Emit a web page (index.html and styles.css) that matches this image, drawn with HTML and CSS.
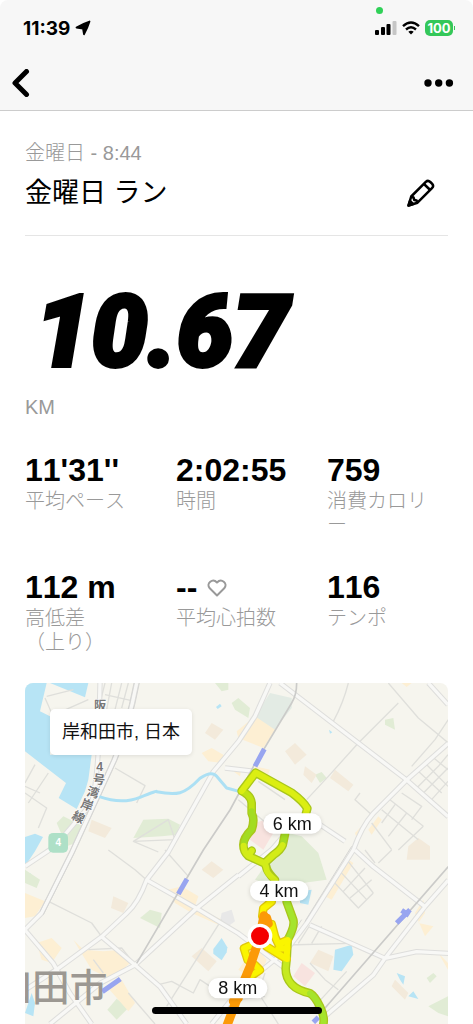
FILE: index.html
```html
<!DOCTYPE html>
<html lang="ja">
<head>
  <meta charset="UTF-8" />
  <meta name="viewport" content="width=device-width, initial-scale=1" />
  <title>金曜日 ラン</title>
  <link rel="stylesheet" href="styles.css">
</head>
<body>
  <header class="top-bar">
    <!-- Status bar -->
    <div class="status-bar">
      <span class="clock">11:39</span>
      <svg class="location" viewBox="0 0 16 16" width="16" height="16"><path d="M14.500 1.500Q12.500 8 9 14.300L8 8.500 1.500 7.500Q8 3.500 14.500 1.500Z" stroke="#000" stroke-width="1.800" stroke-linejoin="round"/></svg>
      <span class="camera-dot"></span>
      <svg class="signal" viewBox="0 0 22 14" width="22" height="14">
        <rect x="0" y="9" width="4" height="5" rx="1"/>
        <rect x="6" y="6" width="4" height="8" rx="1"/>
        <rect x="11.500" y="3" width="4" height="11" rx="1"/>
        <rect x="17.500" y="0" width="4" height="14" rx="1" fill="#c6c6c6"/>
      </svg>
      <svg class="wifi" viewBox="0 0 18 14" width="18" height="14" fill="none" stroke="#000" stroke-width="2.400">
        <path d="M1 5.200Q9-2.200 17 5.200M4 8.500Q9 4 14 8.500"/>
        <path d="M6.300 10.800Q9 8.800 11.700 10.800L9 13.600Z" fill="#000" stroke="none"/>
      </svg>
      <span class="battery">100</span>
    </div>
    <!-- Navigation -->
    <nav class="nav">
      <button type="button" aria-label="戻る">
        <svg viewBox="0 0 18 28" width="18" height="28" fill="none" stroke="#000" stroke-width="5" stroke-linecap="round" stroke-linejoin="round"><path d="M14.500 2.500 3 14 14.500 25.500"/></svg>
      </button>
      <button type="button" aria-label="メニュー">
        <svg viewBox="0 0 30 8" width="30" height="8"><circle cx="4" cy="4" r="3.700"/><circle cx="14.700" cy="4" r="3.700"/><circle cx="25.400" cy="4" r="3.700"/></svg>
      </button>
    </nav>
  </header>

  <main class="run">
    <section class="run-header">
      <div>
        <p class="run-date">金曜日 - 8:44</p>
        <h1>金曜日 ラン</h1>
      </div>
      <button type="button" aria-label="編集">
        <svg viewBox="0 0 28 28" width="28" height="28" fill="none" stroke="#000" stroke-width="2.500" stroke-linejoin="round">
          <path d="M1.500 26.500 4.200 17.500 18.800 2.900Q21 .800 23.300 3L25 4.700Q27.200 7 25 9.200L10.500 23.700Z"/>
          <path d="M17 5 23.200 11M4.300 17.700 6.500 18.500 7.300 21 9.600 21.500 10.400 23.600"/>
          <path d="M1.500 26.500 3 22 6 25Z" fill="#000"/>
        </svg>
      </button>
    </section>

    <p class="distance">10.67</p>
    <p class="unit">KM</p>

    <section class="stats">
      <div class="stat">
        <p class="value">11'31''</p>
        <p class="label">平均ペース</p>
      </div>
      <div class="stat">
        <p class="value">2:02:55</p>
        <p class="label">時間</p>
      </div>
      <div class="stat">
        <p class="value">759</p>
        <p class="label">消費カロリー</p>
      </div>
      <div class="stat">
        <p class="value">112 m</p>
        <p class="label">高低差<br>（上り）</p>
      </div>
      <div class="stat">
        <p class="value">--
          <svg viewBox="0 0 20 18" width="20" height="18" fill="none" stroke="#999" stroke-width="2" stroke-linejoin="round"><path d="M10 16.500 2.500 9C-1 4.500 5.500-1.500 10 3.500 14.500-1.500 21 4.500 17.500 9Z"/></svg>
        </p>
        <p class="label">平均心拍数</p>
      </div>
      <div class="stat">
        <p class="value">116</p>
        <p class="label">テンポ</p>
      </div>
    </section>

    <!-- Route map -->
    <section class="map">
      <svg class="map-canvas" viewBox="0 0 1269 1023" preserveAspectRatio="xMidYMin slice">
        <defs>
          <g id="roads">
            <path d="M765 0 1145 291 1270 401"/>
            <path d="M1270 181 1145 291 1045 391Q1010 430 985 501L845 721 785 801 650 911 560 1023"/>
            <path d="M335 0Q310 130 268 231L195 390 140 510 50 690 0 740"/>
            <path d="M225 0 220 200Q215 300 200 360L90 490 0 550"/>
            <path d="M735 0 690 100 640 176 565 266 430 507 365 591Q340 660 305 691L230 761 100 856 0 921"/>
            <path d="M365 591 515 676 640 751 785 860"/>
            <path d="M640 576 515 676 330 846 225 901 75 1023M230 761 330 846 405 911 485 1023"/>
            <path d="M0 741 85 841 135 931 200 1023M600 255 690 265M640 580 740 500 800 430"/>
            <path d="M990 501 1045 551 1200 671M855 726 1080 826 1200 671 1270 591M1270 811 1175 806 1080 826 1045 876 900 1000"/>
            <path d="M840 395 960 475M1210 0 1269 65"/>
          </g>
        </defs>
        <!-- water -->
        <g class="water">
          <path d="M0 0H65L45 85 75 100 75 215H200L190 290 180 325 155 378 101 345 123 300 0 205Z"/>
          <path d="M75 0H190L180 43Z"/>
          <path d="M0 462 30 452 54 462 30 505 0 550Z"/>
          <path d="M565 798 590 765 607 793 605 808 590 832 565 812Z"/>
          <path d="M930 800 980 785 985 815 950 865 925 860Z"/>
          <path d="M1115 870 1140 880 1135 905 1125 890ZM1165 925 1180 948 1150 940ZM825 625 860 620 850 665 825 660Z"/>
          <path d="M832 545 845 535 850 545 838 558ZM15 570 30 590 28 605 15 590ZM20 930 30 960 25 1000 0 990 10 960Z"/>
          <path d="M573 72 585 62 590 70 578 78ZM912 140 922 148 915 152Z"/>
        </g>
        <!-- parks and schools -->
        <g class="park">
          <path d="M355 410 430 407 465 425 455 455 410 460 325 465Z"/>
          <path d="M115 400 175 430 165 475 125 490 95 420Z"/>
          <path d="M375 680 410 690 405 735 345 705Z"/>
          <path d="M275 947 310 975 275 1010 247 980Z"/>
          <path d="M570 0H610V20L590 25ZM620 60 640 45 675 75 670 105 630 80Z"/>
          <path d="M1080 110 1105 105 1110 140 1080 125ZM870 275 890 267 905 285 885 300Z"/>
          <path d="M740 520 790 450 830 460 880 510 905 590 760 610 690 590Z"/>
          <path d="M1205 885 1225 870 1235 880 1215 900ZM1210 970 1269 940V1000L1240 990Z"/>
          <path d="M0 560 45 590 35 615 0 600Z"/>
        </g>
        <path class="plant" d="M735 30 800 45 800 75 745 145 690 100Z"/>
        <path class="hospital" d="M690 420 720 410 745 450 715 500 675 470ZM830 840 870 870 840 910 805 880Z"/>
        <g class="school">
          <path d="M540 150 560 120 595 140 570 170ZM200 410 260 435 240 465 190 445Z"/>
          <path d="M780 205 810 180 845 215 810 245ZM840 250 875 275 860 300 835 275ZM930 260 985 305 970 325 915 285Z"/>
          <path d="M265 640 310 660 295 690 258 675ZM530 560 560 535 595 560 565 585ZM500 820 530 795 575 835 550 865Z"/>
          <path d="M880 800 925 820 910 865 855 840ZM1110 890 1150 930 1140 950 1100 910ZM1150 490 1180 465 1215 490V530H1145Z"/>
        </g>
        <!-- built-up areas -->
        <g class="town">
          <path d="M530 210 560 195 595 215 590 240 550 235ZM690 100 750 140 715 195 640 165 635 145Z"/>
          <path d="M0 630 60 655 30 700 0 705ZM35 780 80 765 110 795 80 840 50 830Z"/>
          <path d="M145 770 175 800 235 805 290 800 315 840 260 890 200 860Z"/>
          <path d="M430 620 470 610 520 640 510 670 590 710 580 725 500 690 450 660Z"/>
          <path d="M245 910 290 890 330 960 310 985Z"/>
          <path d="M990 450 1010 430 1015 445 995 465ZM1030 440 1060 400 1070 410 1040 455ZM900 640 970 530 985 540 920 650Z"/>
          <path d="M1170 690 1195 650 1200 690 1180 720 1225 730 1200 760ZM690 250 735 260 725 285 690 275ZM625 265 650 255 645 280Z"/>
          <path d="M640 860 690 790 725 830 700 900ZM1240 810 1269 840V860ZM1130 0H1160L1145 12Z"/>
        </g>
        <path class="block" d="M590 690 620 680 630 715 610 730 585 715Z"/>
        <!-- small streets -->
        <g class="street">
          <path d="M65 40 145 20M110 85 190 50M60 45 80 90M240 0 225 60M260 0 245 80M290 0 270 80M240 35 330 55M310 0 290 75"/>
          <path d="M0 330 65 375 40 435M30 245 0 300M70 270 10 360M0 310 45 330"/>
          <path d="M270 255 360 308 335 360M325 475 430 410 450 470 325 475 400 507"/>
          <path d="M250 501 330 560 365 591M420 501 490 580M60 650 200 720 230 761M425 970 590 710"/>
          <path d="M190 800 290 795 330 846M205 830 235 870M400 905 440 895 505 930 525 890 570 920"/>
          <path d="M970 0Q955 60 925 115M1090 0 1180 105 1270 180M845 350 910 280 1000 180 1120 60"/>
          <path d="M640 350 735 430M700 295 780 350M1005 330 990 350 1040 395M1130 330 1190 370 1160 410"/>
          <path d="M1160 250 1230 170 1270 110M1200 240 1269 310M1180 265 1250 330M1220 220 1269 260M1170 320 1240 250 1269 215M1190 335 1269 255M1215 355 1269 295M1070 380 1180 470M1095 350 1195 430M1040 420 1100 500M1195 430 1120 501M1110 365 1070 420M1145 390 1090 460"/>
          <path d="M940 560 1025 650M965 530 1045 630M1045 630 1000 675 920 590M1020 555 955 625M1040 590 975 645"/>
          <path d="M855 726 820 781M890 730 860 781M785 786 975 781M855 840 900 890 940 920M965 865 860 980M640 950 720 940M720 870 700 930 760 1023M310 930 390 1023M1060 540 1100 501M1020 501 1050 540"/>
        </g>
        <!-- roads: edge, then fill -->
        <use href="#roads" class="road-edge"/>
        <use href="#roads" class="road-fill"/>
        <path class="highway" d="M327 0Q302 130 260 231L187 390 132 510 45 685M343 0Q318 130 276 231L203 390 148 510 55 695M840 715 980 490M830 710 770 800"/>
        <path class="rail" d="M815 0Q815 35 800 60L685 251 615 381 535 501 335 841M1270 551 895 981"/>
        <path class="river" d="M223 341Q290 365 345 343T395 326Q440 335 465 329T525 286Q560 262 575 280T605 315L645 326"/>
        <path class="station" d="M718 198 690 250M486 588 460 633M286 888 232 926M1155 680 1115 720"/>
        <path class="station" d="M1130 682 1152 697M865 1018 880 1003"/>
        <!-- map labels -->
        <text class="road-name" x="207" y="82">阪</text>
        <text class="road-name" x="214 202 183 164 138" y="263 300 337 372 406" rotate="0 8 14 20 28">4号湾岸線</text>
        <text class="city-name" x="247" y="954" text-anchor="end">和田市</text>
        <rect x="70" y="450" width="59" height="59" rx="14" fill="#aee0c7"/>
        <text class="route-number" x="100" y="490" text-anchor="middle">4</text>
        <!-- run route -->
        <g class="route">
          <path class="edge" d="M750 591Q728 568 725 556T718 541L670 519Q655 505 655 485T680 440Q690 410 680 391V360Q678 345 668 336T650 324L692 269 800 329Q835 355 847 376L843 391M680 503 670 519M780 453 773 486Q768 500 745 516L718 541"/>
          <path class="edge" d="M785 656Q790 670 805 711 810 730 788 771L785 826 782 856Q782 885 800 904T855 931Q870 940 885 971T895 1023"/>
          <path class="edge gold" d="M740 656 715 676 712 700M740 723 750 761 760 783 788 771M725 791 785 828M760 797 785 795M680 786 657 796 668 831M690 846 705 861 675 881"/>
          <path stroke="#c0e314" d="M680 391V360Q678 345 668 336T650 324"/>
          <path stroke="#dbee12" d="M650 324 692 269 800 329Q835 355 847 376L843 391"/>
          <path stroke="#a3dc22" d="M680 385V391Q690 410 680 440 655 465 656 490M780 453 773 486"/>
          <path stroke="#d3ec18" d="M656 488Q656 508 670 519L718 541Q725 550 725 560T750 591M680 503 670 519M773 486Q768 500 745 516L718 541"/>
          <path stroke="#a5e42c" d="M785 656Q790 670 805 711 810 730 788 771"/>
          <path stroke="#c5ea20" d="M785 826 782 856Q782 885 800 904T855 931"/>
          <path stroke="#a5e42c" d="M855 931Q870 940 885 971T895 1023"/>
          <path stroke="#faf500" d="M740 656 715 676 712 700M740 723 750 761 760 783 788 771 785 828 725 791M760 797 785 795M680 786 657 796 668 831M690 846 705 861 675 881"/>
          <path class="orange" d="M717 698 705 759 675 851 650 911 605 1030"/>
          <path class="orange" d="M725 705 730 722M640 945 625 955"/>
        </g>
        <circle cx="705" cy="759" r="37" fill="#fff"/>
        <circle cx="705" cy="759" r="27" fill="#f40000"/>
        <g class="marker">
          <rect x="715" y="391" width="175" height="61" rx="30"/>
          <text x="802" y="440">6 km</text>
          <rect x="675" y="593" width="175" height="61" rx="30"/>
          <text x="762" y="642">4 km</text>
          <rect x="550" y="885" width="177" height="61" rx="30"/>
          <text x="638" y="934">8 km</text>
        </g>
      </svg>
      <p class="place">岸和田市, 日本</p>
    </section>
  </main>
  <div class="home-indicator"></div>
</body>
</html>
```

FILE: styles.css
```css
* {
  margin: 0;
  padding: 0;
  box-sizing: border-box;
}

body {
  min-height: 100vh;
  display: flex;
  flex-direction: column;
  background: #fff;
  color: #000;
  font-family: "Liberation Sans", "Noto Sans CJK JP", sans-serif;
  font-kerning: none;
}

svg {
  display: block;
}

button {
  background: none;
  border: none;
  cursor: pointer;
}

/* ===== Top bar ===== */
.top-bar {
  background: #f7f7f7;
  border-bottom: 1px solid #ccc;
  border-radius: 8px 8px 0 0;
}

.status-bar {
  position: relative;
  display: flex;
  align-items: center;
  height: 56px;
  padding: 0 20px 0 23px;
}

.clock {
  font-family: Inter, sans-serif;
  font-size: 19px;
  font-weight: 700;
}

.location {
  margin-left: 5px;
}

.camera-dot {
  position: absolute;
  top: 7px;
  right: 90px;
  width: 7px;
  height: 7px;
  border-radius: 50%;
  background: #30d158;
}

.signal {
  margin-left: auto;
}

.wifi {
  margin: 0 5px;
}

.battery {
  width: 28px;
  border-radius: 5px;
  background: #34c759;
  color: #fff;
  font-family: Inter, sans-serif;
  font-size: 13px;
  font-weight: 700;
  line-height: 16px;
  text-align: center;
}

.battery::after {
  content: "";
  position: absolute;
  top: 26px;
  right: 18px;
  width: 1px;
  height: 4px;
  background: #34c759;
}

.nav {
  display: flex;
  justify-content: space-between;
  align-items: center;
  height: 54px;
  padding: 0 19px 0 12px;
}

/* ===== Run summary ===== */
.run {
  flex: 1;
  display: flex;
  flex-direction: column;
  padding: 30px 25px 0;
}

.run-header {
  display: flex;
  justify-content: space-between;
  align-items: flex-end;
  padding-bottom: 22px;
  border-bottom: 1px solid #e5e5e5;
}

.run-header button {
  padding: 0 13px 6px 0;
}

.run-date,
.unit,
.label {
  color: #999;
  font-size: 20px;
  font-weight: 300;
  line-height: 24px;
}

h1 {
  margin-top: 8px;
  font-size: 27px;
  font-weight: 400;
  line-height: 40px;
}

.distance {
  margin-top: 48px;
  padding-left: 10px;
  font-family: Roboto, sans-serif;
  font-size: 100px;
  font-style: italic;
  font-weight: 900;
  line-height: 96px;
  -webkit-text-stroke: 4px #000;
}

.unit {
  margin-top: 15px;
}

.stats {
  display: grid;
  grid-template-columns: repeat(3, 1fr);
  gap: 32px 30px;
  margin-top: 33px;
}

.value {
  display: flex;
  align-items: center;
  gap: 10px;
  font-size: 32px;
  font-weight: 700;
  line-height: 37px;
  white-space: nowrap;
}

.label {
  padding-right: 10px;
  line-break: loose;
}

/* ===== Map ===== */
.map {
  position: relative;
  flex: 1;
  min-height: 340px;
  margin-top: 29px;
  border-radius: 8px 8px 0 0;
  background: #f6f5ee;
  overflow: hidden;
}

.map-canvas {
  position: absolute;
  width: 100%;
  height: 100%;
  fill: none;
  stroke-linejoin: round;
}

.place {
  position: absolute;
  top: 26px;
  left: 25px;
  padding: 11px 12px;
  border-radius: 5px;
  background: #fff;
  box-shadow: 0 1px 4px rgba(0, 0, 0, 0.1);
  color: #111;
  font-size: 18px;
  line-height: 24px;
}

.water { fill: #b7e4f5; }
.park { fill: #e1ecd5; }
.school { fill: #f3eadb; }
.town { fill: #fdefd3; }
.plant { fill: #e3ebe4; }
.hospital { fill: #f8e3df; }
.block { fill: #e8e8e8; }

.street {
  stroke: #dfdfdb;
  stroke-width: 4;
}

.road-edge {
  stroke: #dededc;
  stroke-width: 16;
}

.road-fill {
  stroke: #f8f8f6;
  stroke-width: 10;
}

.highway {
  stroke: #d6d6d4;
  stroke-width: 3;
}

.rail {
  stroke: #cbcbc9;
  stroke-width: 5;
}

.river {
  stroke: #ace0f4;
  stroke-width: 9;
}

.station {
  stroke: #98a5f0;
  stroke-width: 15;
}

.road-name {
  fill: #777;
  stroke: #fff;
  stroke-width: 4;
  paint-order: stroke;
  font-size: 37px;
  font-weight: 700;
}

.city-name {
  fill: #9c9892;
  font-size: 113px;
  font-weight: 500;
}

.route-number {
  fill: #fff;
  font-size: 30px;
  font-weight: 700;
}

.route {
  stroke-width: 18;
  stroke-linecap: round;
}

.route .edge {
  stroke: #a9c61b;
  stroke-width: 26;
}

.route .gold {
  stroke: #e0c80c;
}

.route .orange {
  stroke: #fb9a08;
  stroke-width: 27;
}

.marker {
  fill: #fff;
  filter: drop-shadow(0 3px 6px rgba(0, 0, 0, 0.15));
}

.marker text {
  fill: #111;
  font-size: 54px;
  text-anchor: middle;
}

.home-indicator {
  position: fixed;
  bottom: 10px;
  left: 50%;
  width: 170px;
  height: 7px;
  margin-left: -85px;
  border-radius: 4px;
  background: #000;
}
```
